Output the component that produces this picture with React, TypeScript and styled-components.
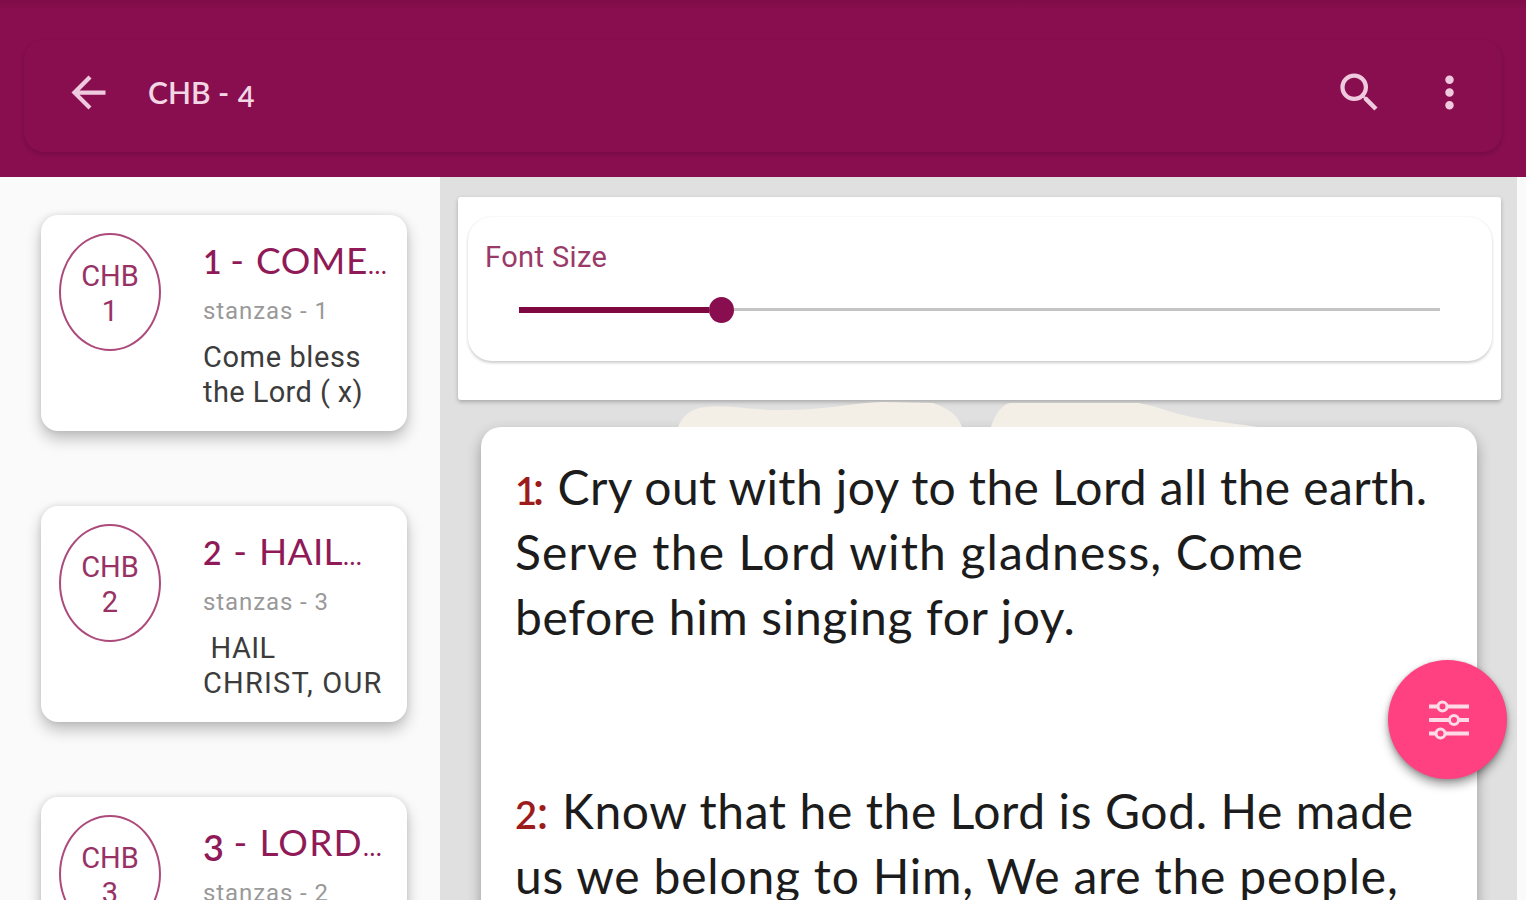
import styled, { createGlobalStyle } from 'styled-components'
import { MdArrowBack, MdMoreVert, MdSearch } from 'react-icons/md'

const hymns = [
  {
    id: 1,
    title: 'COME',
    space: 0.6,
    gap: 0,
    stanzas: 1,
    preview: [
      { text: 'Come bless', space: 0.6 },
      { text: 'the Lord ( x)', space: 0.4 },
    ],
  },
  {
    id: 2,
    title: 'HAIL',
    space: 0.3,
    gap: 3,
    stanzas: 3,
    preview: [
      { text: ' HAIL', space: 0.4 },
      { text: 'CHRIST, OUR', space: 1.2 },
    ],
  },
  {
    id: 3,
    title: 'LORD',
    space: 1.2,
    gap: 1,
    stanzas: 2,
    preview: [],
  },
]

const stanzas = [
  {
    id: 1,
    lines: [
      { text: ' Cry out with joy to the Lord all the earth.', space: 0.38 },
      { text: 'Serve the Lord with gladness, Come', space: 1.15 },
      { text: 'before him singing for joy.', space: 0.63 },
    ],
  },
  {
    id: 2,
    lines: [
      { text: ' Know that he the Lord is God. He made', space: 0.6 },
      { text: 'us we belong to Him, We are the people,', space: 0.78 },
    ],
  },
]

export default function App() {
  return (
    <Page>
      <GlobalStyle />
      <Header>
        <Toolbar>
          <MdArrowBack size={51} />
          <Heading>
            CHB - <HeadingDigit>4</HeadingDigit>
          </Heading>
          <MdSearch size={51} />
          <MdMoreVert size={51} />
        </Toolbar>
      </Header>
      <Body>
        <Sidebar>
          {hymns.map((hymn) => (
            <Card key={hymn.id}>
              <Badge>
                <span>CHB</span>
                <span>{hymn.id}</span>
              </Badge>
              <Info>
                <Title $space={hymn.space}>
                  <TitleDigit $drop={hymn.id === 3} $gap={hymn.gap}>
                    {hymn.id}
                  </TitleDigit>
                  <Dash> - </Dash>
                  {hymn.title}
                  <Dots>…</Dots>
                </Title>
                <Count>stanzas - {hymn.stanzas}</Count>
                {hymn.preview.map((line) => (
                  <Preview key={line.text} $space={line.space}>
                    {line.text}
                  </Preview>
                ))}
              </Info>
            </Card>
          ))}
        </Sidebar>
        <Main>
          <Settings>
            <SettingsCard>
              <Label>Font Size</Label>
              <Track>
                <Filled />
                <Thumb />
                <Rest />
              </Track>
            </SettingsCard>
          </Settings>
          <Backdrop viewBox="0 0 600 27" width="600" height="27">
            <path
              d="M20 27C24 17 32 8 48 7C80 5 95 11 130 10C175 9 195 3 225 2L275 3C290 8 300 15 304 27Z"
              fill="#f4efe6"
            />
            <path d="M333 27C337 14 345 3 353 3H480C500 6 520 16 550 20L600 27Z" fill="#f4efe6" />
          </Backdrop>
          <Lyrics>
            {stanzas.map((stanza) => (
              <Stanza key={stanza.id}>
                {stanza.lines.map((line, i) => (
                  <Line key={line.text} $space={line.space}>
                    {i === 0 && (
                      <Mark>
                        <MarkDigit $tight={stanza.id === 1}>{stanza.id}</MarkDigit>:
                      </Mark>
                    )}
                    {line.text}
                  </Line>
                ))}
              </Stanza>
            ))}
          </Lyrics>
        </Main>
      </Body>
      <Fab>
        <svg width="40" height="40" viewBox="0 0 40 40" fill="none" stroke="#ffd9e6" strokeWidth="4">
          <path d="M0 6.500H9M18 6.500H40M0 20H20M30 20H40M0 33.500H7M16 33.500H40" />
          <circle cx="13.500" cy="6.500" r="4.500" strokeWidth="3" />
          <circle cx="25" cy="20" r="4.500" strokeWidth="3" />
          <circle cx="11.500" cy="33.500" r="4.500" strokeWidth="3" />
        </svg>
      </Fab>
    </Page>
  )
}

const GlobalStyle = createGlobalStyle`
  * {
    box-sizing: border-box;
  }
  body {
    margin: 0;
    background: #fafafa;
    font-family: Roboto, sans-serif;
  }
`;
const Page = styled.div`
  position: relative;
  display: flex;
  flex-direction: column;
  width: 1526px;
  height: 900px;
  overflow: hidden;
`;
const Header = styled.header`
  flex: none;
  height: 177px;
  padding: 40px 24px 25px;
  background: linear-gradient(#7f0c49, #880e4f 10px);
`;
const Toolbar = styled.div`
  display: flex;
  align-items: center;
  height: 112px;
  padding: 0 27px 7px 39px;
  border-radius: 20px;
  color: #efc9de;
  box-shadow: 0 2px 4px rgba(60, 0, 40, 0.28);
`;
const Heading = styled.h1`
  flex: 1;
  margin: 0 0 0 34px;
  font-family: Lato, sans-serif;
  font-weight: 600;
  font-size: 30px;
  line-height: 36px;
  color: #f3d6e4;
  & + svg {
    margin-right: 39px;
  }
`;
const HeadingDigit = styled.span`
  position: relative;
  top: 3px;
  margin-left: 1px;
  font-size: 29px;
`;
const Body = styled.div`
  display: flex;
  flex: 1;
  min-height: 0;
`;
const Sidebar = styled.aside`
  display: flex;
  flex: none;
  flex-direction: column;
  gap: 75px;
  width: 440px;
  padding: 38px 33px 0 41px;
  overflow: hidden;
`;
const Card = styled.article`
  display: flex;
  flex: none;
  height: 216px;
  padding: 18px;
  border-radius: 17px;
  background: #fff;
  box-shadow: 0 8px 15px rgba(0, 0, 0, 0.24), 0 0 6px rgba(0, 0, 0, 0.1);
`;
const Badge = styled.div`
  display: flex;
  flex: none;
  flex-direction: column;
  align-items: center;
  width: 102px;
  height: 118px;
  padding-top: 24px;
  border: 2px solid #ad4a7c;
  border-radius: 50%;
  font-size: 29px;
  line-height: 35px;
  color: #983265;
`;
const Info = styled.div`
  flex: 1;
  min-width: 0;
  padding: 6px 0 0 42px;
  white-space: pre;
`;
const Title = styled.h2<{ $space: number }>`
  height: 42px;
  margin: 0;
  font-family: Lato, sans-serif;
  font-weight: 400;
  font-size: 37px;
  line-height: 42px;
  letter-spacing: ${(p) => p.$space}px;
  color: #901a58;
`;
const TitleDigit = styled.span<{ $drop: boolean; $gap: number }>`
  position: relative;
  top: ${(p) => (p.$drop ? 5 : 0)}px;
  margin-right: ${(p) => p.$gap}px;
  font-size: ${(p) => (p.$drop ? 36 : 32)}px;
  font-weight: 600;
  line-height: 1;
  letter-spacing: -0.6px;
`;
const Dash = styled.span`
  margin-right: 3px;
  letter-spacing: -0.2px;
`;
const Dots = styled.span`
  font-size: 25px;
  letter-spacing: 0;
`;
const Count = styled.div`
  margin-top: 15px;
  margin-bottom: 14px;
  font-size: 24px;
  line-height: 30px;
  letter-spacing: 0.9px;
  color: #999;
`;
const Preview = styled.div<{ $space: number }>`
  font-size: 29px;
  line-height: 35px;
  letter-spacing: ${(p) => p.$space}px;
  color: #3c3c3c;
`;
const Main = styled.main`
  flex: none;
  width: 1077px;
  padding: 20px 16px 0 18px;
  background: #e0e0e0;
`;
const Settings = styled.section`
  height: 203px;
  padding: 20px 9px 0 10px;
  border-radius: 3px;
  background: #fff;
  box-shadow: 0 2px 4px rgba(0, 0, 0, 0.25);
`;
const SettingsCard = styled.div`
  height: 144px;
  padding: 22px 52px 0 17px;
  border-radius: 24px;
  box-shadow: 0 1.500px 3px rgba(0, 0, 0, 0.2);
`;
const Label = styled.div`
  font-size: 29px;
  line-height: 37px;
  letter-spacing: 0.4px;
  color: #9a3a69;
`;
const Track = styled.div`
  display: flex;
  align-items: center;
  height: 26px;
  margin: 20.500px 0 0 34px;
`;
const Filled = styled.div`
  width: 190px;
  height: 6px;
  background: #800840;
`;
const Thumb = styled.div`
  width: 25px;
  height: 26px;
  border-radius: 50%;
  background: #880e4f;
`;
const Rest = styled.div`
  flex: 1;
  height: 3px;
  background: #c4c4c4;
`;
const Backdrop = styled.svg`
  display: block;
  margin-left: 200px;
`;
const Lyrics = styled.section`
  height: 620px;
  margin: 0 24px 0 23px;
  padding: 28px 0 0 34px;
  border-radius: 20px;
  background: #fff;
  box-shadow: 0 6px 14px rgba(0, 0, 0, 0.32);
`;
const Stanza = styled.div`
  margin-bottom: 129.500px;
`;
const Line = styled.p<{ $space: number }>`
  margin: 0;
  height: 64.750px;
  font-family: Lato, sans-serif;
  font-size: 48px;
  line-height: 64.750px;
  letter-spacing: ${(p) => p.$space}px;
  white-space: pre;
  color: #1c1c1c;
`;
const Mark = styled.span`
  color: #9c1c1c;
`;
const MarkDigit = styled.span<{ $tight: boolean }>`
  font-size: 38px;
  font-weight: 600;
  letter-spacing: ${(p) => (p.$tight ? -4.5 : -0.5)}px;
`;
const Fab = styled.button`
  position: absolute;
  top: 660px;
  left: 1388px;
  display: flex;
  align-items: center;
  justify-content: center;
  width: 119px;
  height: 119px;
  padding: 0 0 0 2px;
  border: 0;
  border-radius: 50%;
  background: #ff4081;
  box-shadow: 0 6px 10px rgba(0, 0, 0, 0.35), 0 1px 4px rgba(0, 0, 0, 0.2);
`;
